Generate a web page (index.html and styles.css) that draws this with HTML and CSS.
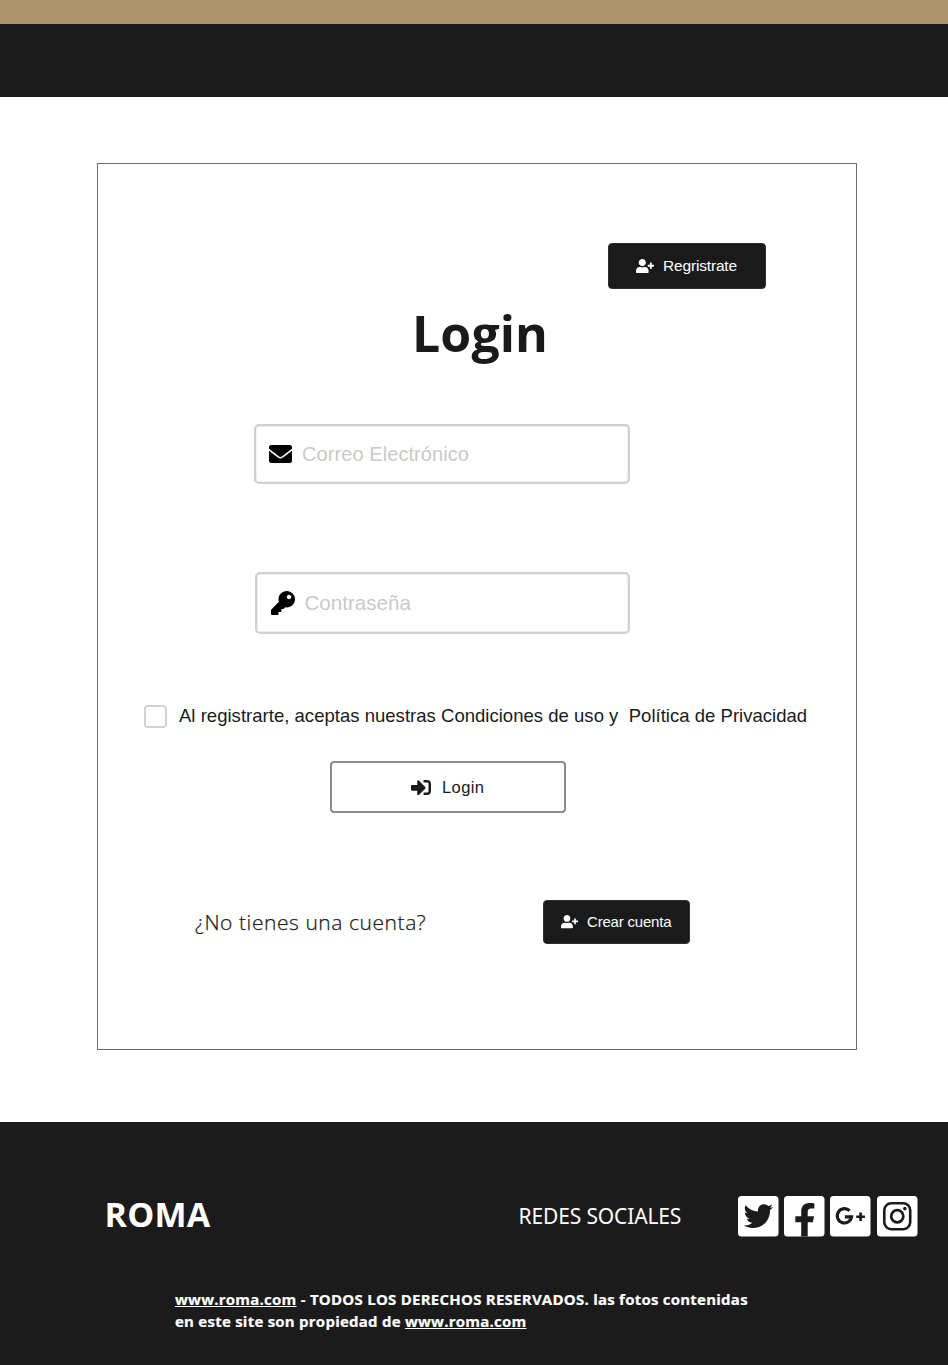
FILE: index.html
```html
<!DOCTYPE html>
<html lang="es">
<head>
<meta charset="utf-8">
<title>Roma - Login</title>
<link rel="stylesheet" href="styles.css">
</head>
<body>
<svg class="defs" width="0" height="0">
  <symbol id="user-plus" viewBox="0 0 640 512"><path d="M624 208h-64v-64c0-8.800-7.200-16-16-16h-32c-8.800 0-16 7.200-16 16v64h-64c-8.800 0-16 7.200-16 16v32c0 8.800 7.200 16 16 16h64v64c0 8.800 7.200 16 16 16h32c8.800 0 16-7.200 16-16v-64h64c8.800 0 16-7.200 16-16v-32c0-8.800-7.200-16-16-16zm-400 48c70.700 0 128-57.300 128-128S294.700 0 224 0 96 57.300 96 128s57.300 128 128 128zm89.600 32h-16.700c-22.200 10.200-46.900 16-72.900 16s-50.600-5.800-72.900-16h-16.700C60.200 288 0 348.200 0 422.400V464c0 26.500 21.500 48 48 48h352c26.500 0 48-21.500 48-48v-41.600c0-74.200-60.200-134.400-134.400-134.400z"/></symbol>
</svg>
<header class="header"></header>
<main class="main">
  <form class="card">
    <button type="button" class="btn btn-register"><svg class="ico-user"><use href="#user-plus"/></svg><span class="t-register">Regristrate</span></button>
    <h1 class="title">Login</h1>
    <div class="field field-mail">
      <svg class="ico-mail" viewBox="0 64 512 384" preserveAspectRatio="none"><path d="M502.300 190.800c3.900-3.100 9.700-.2 9.700 4.700V400c0 26.500-21.500 48-48 48H48c-26.500 0-48-21.500-48-48V195.600c0-5 5.700-7.800 9.700-4.700 22.400 17.400 52.100 39.500 154.100 113.600 21.100 15.400 56.700 47.800 92.200 47.600 35.700.3 72-32.800 92.300-47.600 102-74.100 131.600-96.300 154-113.700zM256 320c23.200.4 56.600-29.200 73.400-41.400 132.700-96.300 142.800-104.700 173.400-128.700 5.800-4.500 9.200-11.500 9.200-18.900v-19c0-26.500-21.500-48-48-48H48c-26.500 0-48 21.500-48 48v19c0 7.400 3.400 14.300 9.200 18.900 30.600 23.900 40.700 32.400 173.400 128.700 16.800 12.200 50.200 41.800 73.400 41.400z"/></svg>
      <span class="t-mail">Correo Electrónico</span>
    </div>
    <div class="field field-pass">
      <svg class="ico-key" viewBox="0 0 512 512"><path d="M512 176C512 273.200 433.200 352 336 352c-11.220 0-22.190-1.062-32.827-3.069l-24.012 27.014A24 24 0 0 1 261.223 384H224v40c0 13.255-10.745 24-24 24h-40v40c0 13.255-10.745 24-24 24H24c-13.255 0-24-10.745-24-24v-78.059c0-6.365 2.529-12.470 7.029-16.971l161.802-161.802C163.108 213.814 160 195.271 160 176 160 78.798 238.797 0 336 0 433.488 0 512 78.511 512 176zM336 128c0 26.510 21.490 48 48 48s48-21.490 48-48-21.490-48-48-48-48 21.490-48 48z"/></svg>
      <span class="t-pass">Contraseña</span>
    </div>
    <div class="terms"><span class="box"></span><span class="t-terms">Al registrarte, aceptas nuestras Condiciones de uso y&nbsp; Política de Privacidad</span></div>
    <button type="button" class="login"><svg class="ico-login" viewBox="0 64 512 384"><path d="M416 448h-84c-6.600 0-12-5.400-12-12v-40c0-6.600 5.400-12 12-12h84c17.700 0 32-14.300 32-32V160c0-17.700-14.300-32-32-32h-84c-6.600 0-12-5.400-12-12V76c0-6.600 5.400-12 12-12h84c53 0 96 43 96 96v192c0 53-43 96-96 96zm-47-201L201 79c-15-15-41-4.500-41 17v96H24c-13.300 0-24 10.700-24 24v96c0 13.300 10.700 24 24 24h136v96c0 21.500 26 32 41 17l168-168c9.300-9.400 9.300-24.600 0-34z"/></svg><span class="t-login">Login</span></button>
    <div class="signup">
      <span class="t-ask">¿No tienes una cuenta?</span>
      <button type="button" class="btn btn-create"><svg class="ico-user ico-user-small"><use href="#user-plus"/></svg><span class="t-create">Crear cuenta</span></button>
    </div>
  </form>
</main>
<footer class="footer">
  <div class="brand-row">
    <span class="brand">ROMA</span>
    <span class="networks">REDES SOCIALES</span>
    <div class="social">
      <svg class="soc" viewBox="0 0 40 40"><rect class="tile" width="40" height="40" rx="3.500"/><path class="ink" transform="translate(5.500 5.300) scale(.0568)" d="M459.370 151.716c.325 4.548.325 9.097.325 13.645 0 138.720-105.583 298.558-298.558 298.558-59.452 0-114.680-17.219-161.137-47.106 8.447.974 16.568 1.299 25.340 1.299 49.055 0 94.213-16.568 130.274-44.832-46.132-.975-84.792-31.188-98.112-72.772 6.498.974 12.995 1.624 19.818 1.624 9.421 0 18.843-1.300 27.614-3.573-48.081-9.747-84.143-51.980-84.143-102.985v-1.299c13.969 7.797 30.214 12.670 47.431 13.319-28.264-18.843-46.781-51.005-46.781-87.391 0-19.492 5.197-37.360 14.294-52.954 51.655 63.675 129.300 105.258 216.365 109.807-1.624-7.797-2.599-15.918-2.599-24.040 0-57.828 46.782-104.934 104.934-104.934 30.213 0 57.502 12.670 76.670 33.137 23.715-4.548 46.456-13.320 66.599-25.340-7.798 24.366-24.366 44.833-46.132 57.827 21.117-2.273 41.584-8.122 60.426-16.243-14.292 20.791-32.161 39.308-52.628 54.253z"/></svg>
      <svg class="soc" viewBox="0 0 40 40"><rect class="tile" width="40" height="40" rx="3.500"/><path class="ink" d="M17 40V26h-5.800v-6H17v-4.500C17 10 20 7 25.300 7c2 0 3.400.1 4.700.4v5h-3.200c-2.600 0-3.400 1.300-3.400 3.300V20h6.200l-1 6h-5.200v14z"/></svg>
      <svg class="soc" viewBox="0 0 40 40"><rect class="tile" width="40" height="40" rx="3.500"/><path class="line" stroke-width="3.100" d="M19.400 14.600A7.100 7.100 0 1 0 21.300 20.600H14.700"/><path class="line" stroke-width="2.600" d="M30.200 16.200v8.600M25.900 20.500h8.600"/></svg>
      <svg class="soc soc-last" viewBox="0 0 40 40"><rect class="tile" width="40" height="40" rx="3.500"/><rect class="line" x="7.200" y="7.200" width="25.600" height="25.600" rx="6.800" stroke-width="2.600"/><circle class="line" cx="20" cy="20" r="6" stroke-width="2.700"/><circle class="ink" cx="27.500" cy="12.500" r="1.800"/></svg>
    </div>
  </div>
  <p class="legal"><a>www.roma.com</a> - TODOS LOS DERECHOS RESERVADOS. las fotos contenidas<br>en este site son propiedad de <a>www.roma.com</a></p>
</footer>
</body>
</html>
```
FILE: styles.css
```css
* { box-sizing: border-box; }
body { margin: 0; background: #fff; color: #1a1a1a; font-family: "Liberation Sans", Arial, sans-serif; }
span, a { white-space: nowrap; }
svg { display: block; flex: none; }
button { font-family: inherit; padding: 0; }
.defs { display: none; }
.header { height: 97px; background: #1a1a1a; border-top: 24px solid #ad946d; }
.main { padding: 66px 0 72px 97px; }
.card { display: flex; flex-direction: column; width: 760px; height: 887px; border: 1px solid #6c6c6c; padding-top: 79px; }
.btn { display: flex; align-items: center; background: #1a1a1a; color: #fff; fill: #fff; border: 1px solid #303030; border-radius: 4px; }
.btn-register { width: 158px; height: 46px; margin-left: 510px; padding-left: 27px; gap: 9px; font-size: 15.500px; letter-spacing: -.17px; }
.ico-user { width: 18px; height: 14.400px; }
.ico-user-small { width: 17px; height: 13.600px; }
.title { margin: 10px 0 0 314px; font: 700 50px/68px "Open Sans", sans-serif; letter-spacing: .1px; }
.field { display: flex; align-items: center; border: 2px solid #cfcfcf; border-radius: 5px; box-shadow: inset 0 0 0 .5px #dedede; color: #c9c9c9; font-size: 20px; fill: #000; }
.field-mail { width: 376px; height: 60px; margin: 57px 0 0 156px; padding-left: 13px; gap: 10px; }
.t-mail { letter-spacing: .08px; }
.ico-mail { width: 23px; height: 18px; }
.field-pass { width: 375px; height: 62px; margin: 88px 0 0 157px; padding-left: 13.500px; gap: 10px; font-size: 20.600px; }
.ico-key { width: 24px; height: 24px; }
.terms { display: flex; align-items: center; height: 24px; margin: 70px 0 0 46px; gap: 12px; font-size: 18.500px; letter-spacing: .025px; }
.box { width: 23px; height: 23px; border: 2px solid #d2d2d2; border-radius: 4px; }
.login { display: flex; align-items: center; width: 236px; height: 52px; margin: 33px 0 0 232px; padding-left: 79px; gap: 11px; background: #fff; border: 2px solid #8c8c8c; border-radius: 4px; color: #1a1a1a; fill: #1a1a1a; font-size: 16.500px; letter-spacing: .4px; }
.ico-login { width: 20px; height: 15px; }
.signup { display: flex; align-items: center; margin: 87px 0 0 97px; height: 44px; }
.t-ask { width: 348px; font: 300 21px/30px "Open Sans", sans-serif; letter-spacing: .56px; -webkit-text-stroke: .25px #1a1a1a; }
.btn-create { width: 147px; height: 44px; padding-left: 17px; gap: 9px; font-size: 15px; letter-spacing: -.2px; }
.t-create { padding-bottom: 2px; }
.footer { height: 243px; background: #1b1b1b; color: #fff; padding-top: 74px; font-family: "Open Sans", sans-serif; }
.brand-row { display: flex; align-items: center; height: 41px; padding-left: 104.500px; }
.brand { width: 414px; padding-bottom: 6px; font-size: 34px; font-weight: 700; line-height: 40px; letter-spacing: .2px; }
.networks { width: 219.500px; padding-bottom: 2px; font: 400 21px/30px "Noto Sans", sans-serif; letter-spacing: -.14px; }
.social { display: flex; gap: 5.500px; }
.soc { width: 40.500px; height: 40.500px; }
.soc-last { margin-left: 1px; }
.tile { fill: #fff; }
.ink { fill: #1b1b1b; }
.line { fill: none; stroke: #1b1b1b; }
.legal { margin: 51px 0 0 175px; font-size: 15px; font-weight: 700; line-height: 22px; letter-spacing: .24px; -webkit-text-stroke: .2px #fff; }
.legal a { text-decoration: underline; }
```
